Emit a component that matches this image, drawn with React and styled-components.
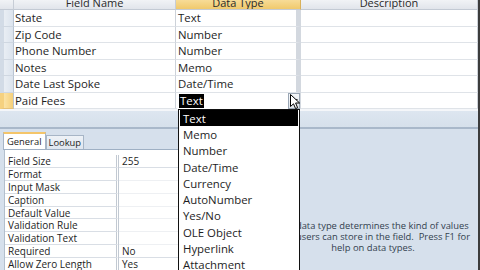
import React from "react";
import styled, { createGlobalStyle } from "styled-components";

const Global = createGlobalStyle`
  html, body { margin: 0; padding: 0; background: #d6e0ec; }
  body { width: 480px; height: 270px; overflow: hidden; }
  * { box-sizing: border-box; }
`;

const Window = styled.div`
  width: 480px;
  height: 270px;
  display: flex;
  flex-direction: column;
  overflow: hidden;
  border-right: 2px solid #3c3c3c;
  font-family: "Open Sans", "Noto Sans", sans-serif;
  color: #1e1e1e;
  background: #d6e0ec;
`;

const TopPane = styled.div`
  flex-shrink: 0;
  display: grid;
  grid-template-columns: 14px 162px 125px 1fr;
  grid-template-rows: 10px repeat(6, 16.5px) 2px;
  background: #ffffff;
`;

const HeaderCell = styled.div`
  height: 10px;
  overflow: hidden;
  background: ${(p) => (p.$active ? "linear-gradient(#f7dc97, #f0c96c)" : "linear-gradient(#f1f3f6, #e1e5eb)")};
  border-right: 1px solid ${(p) => (p.$active ? "#d9b15a" : "#c7cdd6")};
  border-bottom: 1px solid #c3cad4;
  display: flex;
  justify-content: center;
  align-items: flex-end;
  font-size: 11px;
  line-height: 14px;
  color: #2a2a2a;
  & > span { margin-bottom: -1px; }
`;

const Selector = styled.div`
  background: ${(p) => (p.$current ? "linear-gradient(90deg, #fbe3a6, #f5cf78)" : "linear-gradient(90deg, #e9eef4, #dbe3ed)")};
  border-right: 1px solid #b9c4d2;
  border-bottom: 1px solid ${(p) => (p.$current ? "#e6c27a" : "#cfd7e1")};
  border-left: 4px solid ${(p) => (p.$current ? "#f5d17f" : "#d2dbe6")};
`;

const Cell = styled.div`
  position: relative;
  height: 16.5px;
  display: flex;
  align-items: center;
  padding-left: ${(p) => (p.$pad ?? 2)}px;
  font-size: 11.4px;
  white-space: nowrap;
  border-bottom: 1px solid #dfe3e8;
  border-right: 1px solid ${(p) => (p.$gap ? "#d3d8df" : "#cdd2d9")};
  ${(p) => p.$gap && "border-right-width: 5px;"}
`;

const GridEnd = styled.div`
  grid-column: 1 / -1;
  background: #f4f6f9;
`;

const BlankStrip = styled.div`
  flex-shrink: 0;
  height: 18px;
  background: linear-gradient(#dde6f0, #d6e0eb);
  border-bottom: 2px solid #a9b8ca;
`;

const LowerPane = styled.div`
  flex: 1;
  min-height: 0;
  overflow: hidden;
  display: flex;
  background: #d6e0ec;
`;

const PropsArea = styled.div`
  width: 268px;
  padding-left: 3px;
  display: flex;
  flex-direction: column;
`;

const Tabs = styled.div`
  flex-shrink: 0;
  display: flex;
  align-items: flex-end;
  height: 21px;
  border-bottom: 1px solid #9fb0c4;
`;

const Tab = styled.div`
  height: ${(p) => (p.$active ? 17 : 14)}px;
  padding: 0 ${(p) => (p.$active ? 3 : 2)}px;
  display: flex;
  align-items: center;
  font-size: 9.4px;
  color: #1e1e1e;
  background: ${(p) => (p.$active ? "#ffffff" : "linear-gradient(#eef2f7, #dfe6ef)")};
  border: 1px solid #a7b5c6;
  border-bottom: none;
  border-top: ${(p) => (p.$active ? "2px solid #f4c56a" : "1px solid #a7b5c6")};
`;

const PropGrid = styled.div`
  flex-shrink: 0;
  display: grid;
  grid-template-columns: 114px 1fr;
  grid-auto-rows: 12.9px;
  padding-top: 5px;
  margin-left: 1px;
  border-left: 1px solid #b3bfcd;
  background: #ffffff;
`;

const PropLabel = styled.div`
  padding-left: 3px;
  font-size: 10px;
  line-height: 12px;
  white-space: nowrap;
  color: #1e1e1e;
  background: #ffffff;
  border-bottom: 1px solid #d9dee5;
  border-right: 3px double #c2c9d2;
`;

const PropValue = styled.div`
  padding-left: 3px;
  font-size: 10px;
  line-height: 12px;
  background: #ffffff;
  border-bottom: 1px solid ${(p) => (p.$hasValue ? "#d9dee5" : "#eef0f3")};
`;

const HelpArea = styled.div`
  flex: 1;
  display: flex;
  justify-content: center;
  padding-top: 91px;
`;

const HelpText = styled.div`
  width: 200px;
  text-align: center;
  font-size: 9.4px;
  line-height: 11px;
  color: #33404f;
`;

const Combo = styled.div`
  position: absolute;
  left: 1px;
  top: 0;
  width: 123px;
  height: 16.5px;
  display: flex;
  align-items: stretch;
  background: #ffffff;
  z-index: 5;
`;

const Selected = styled.span`
  margin: 1px 0 1px 2px;
  padding: 0 1px;
  background: #000000;
  color: #ffffff;
  display: flex;
  align-items: center;
  font-size: 11.4px;
`;

const DropButton = styled.div`
  position: relative;
  margin-left: auto;
  width: 12px;
  background: linear-gradient(#f6f8fa, #dfe4ea);
  border: 1px solid #9aa6b4;
  display: flex;
  align-items: center;
  justify-content: center;
`;

const Cursor = styled.svg`
  position: absolute;
  left: 1px;
  top: 0px;
`;

const List = styled.div`
  position: absolute;
  left: 2px;
  top: 16.5px;
  width: 122px;
  background: #ffffff;
  border: 1px solid #111111;
  padding: 0 1px;
  z-index: 4;
`;

const ListItem = styled.div`
  height: 16.3px;
  display: flex;
  align-items: center;
  padding-left: 3px;
  font-size: 11.4px;
  background: ${(p) => (p.$active ? "#000000" : "transparent")};
  color: ${(p) => (p.$active ? "#ffffff" : "#1e1e1e")};
`;

const fields = [
  ["State", "Text"],
  ["Zip Code", "Number"],
  ["Phone Number", "Number"],
  ["Notes", "Memo"],
  ["Date Last Spoke", "Date/Time"],
  ["Paid Fees", "Text"],
];

const types = ["Text", "Memo", "Number", "Date/Time", "Currency", "AutoNumber", "Yes/No", "OLE Object", "Hyperlink", "Attachment"];

const props = [
  ["Field Size", "255"],
  ["Format", ""],
  ["Input Mask", ""],
  ["Caption", ""],
  ["Default Value", ""],
  ["Validation Rule", ""],
  ["Validation Text", ""],
  ["Required", "No"],
  ["Allow Zero Length", "Yes"],
];

function DataTypeCombo() {
  return (
    <>
      <Combo>
        <Selected>Text</Selected>
        <DropButton>
          <svg width="7" height="4" viewBox="0 0 7 4">
            <path d="M0 0 L7 0 L3.5 4 Z" fill="#333" />
          </svg>
          <Cursor width="11" height="16" viewBox="0 0 11 16">
            <path d="M0.5 0.5 L0.5 12.5 L3.5 9.8 L5.6 14.6 L7.6 13.7 L5.6 9 L9.6 9 Z" fill="#ffffff" stroke="#000000" strokeWidth="1" strokeLinejoin="miter" />
          </Cursor>
        </DropButton>
      </Combo>
      <List>
        {types.map((t, i) => (
          <ListItem key={t} $active={i === 0}>{t}</ListItem>
        ))}
      </List>
    </>
  );
}

export default function App() {
  return (
    <>
      <Global />
      <Window>
        <TopPane>
          <HeaderCell />
          <HeaderCell><span>Field Name</span></HeaderCell>
          <HeaderCell $active><span>Data Type</span></HeaderCell>
          <HeaderCell><span>Description</span></HeaderCell>
          {fields.map(([name, type], i) => {
            const current = i === fields.length - 1;
            return (
              <React.Fragment key={name}>
                <Selector $current={current} />
                <Cell $pad={1}>{name}</Cell>
                <Cell $gap>{current ? <DataTypeCombo /> : type}</Cell>
                <Cell />
              </React.Fragment>
            );
          })}
          <GridEnd />
        </TopPane>
        <BlankStrip />
        <LowerPane>
          <PropsArea>
            <Tabs>
              <Tab $active>General</Tab>
              <Tab>Lookup</Tab>
            </Tabs>
            <PropGrid>
              {props.map(([label, value]) => (
                <React.Fragment key={label}>
                  <PropLabel>{label}</PropLabel>
                  <PropValue $hasValue={!!value}>{value}</PropValue>
                </React.Fragment>
              ))}
            </PropGrid>
          </PropsArea>
          <HelpArea>
            <HelpText>
              The data type determines the kind of values that users can store in the field.&nbsp; Press F1 for help on data types.
            </HelpText>
          </HelpArea>
        </LowerPane>
      </Window>
    </>
  );
}
